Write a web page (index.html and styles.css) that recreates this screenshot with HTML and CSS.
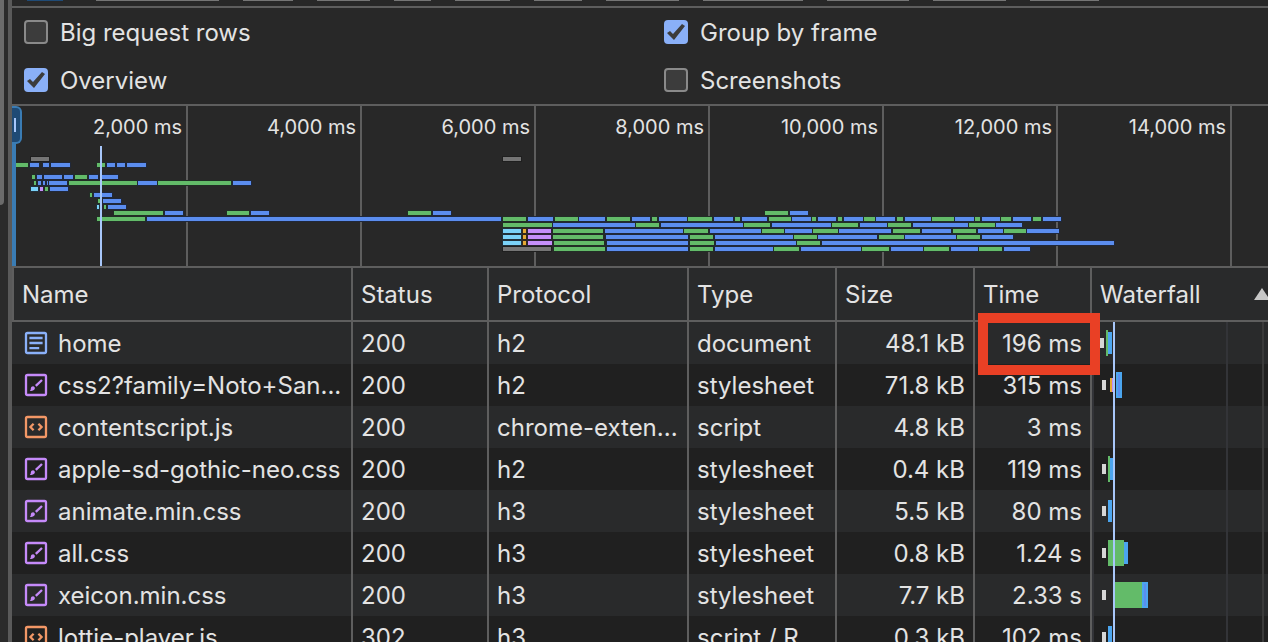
FILE: index.html
```html
<!DOCTYPE html>
<html lang="en">
<head>
    <meta charset="UTF-8">
    <meta name="viewport" content="width=device-width, initial-scale=1.0">
    <title>Network</title>
    <link rel="stylesheet" href="styles.css">
</head>
<body>
    <!-- Icons used in the request list -->
    <svg class="sprite" aria-hidden="true">
        <symbol id="icon-document" viewBox="0 0 24 24">
            <rect x="2" y="2" width="20" height="20" rx="1.5"/>
            <path d="M5.4 7h13.2M5.4 12h13.2M5.4 17.2h9.8"/>
        </symbol>
        <symbol id="icon-stylesheet" viewBox="0 0 24 24">
            <rect x="2" y="2" width="20" height="20" rx="1.5"/>
            <path d="M18 7l-6.2 5.8"/>
            <path class="solid" d="M9.2 13.2c1.6.4 2.2 2 1.2 3.4c-1 1.3-3 1.7-4.6 1.2c1-.8.9-1.4 1-2.4c.2-1.4 1.2-2.3 2.4-2.2z"/>
        </symbol>
        <symbol id="icon-script" viewBox="0 0 24 24">
            <rect x="2" y="2" width="20" height="20" rx="1.5"/>
            <path d="M9.6 8.7L6.4 12l3.2 3.3M14.4 8.7l3.2 3.3l-3.2 3.3"/>
        </symbol>
    </svg>

    <div class="gutter"><div class="thumb"></div></div>

    <main class="panel">
        <div class="filters">
            <span class="pill active"></span>
            <span class="pill w123"></span>
            <span class="pill w50"></span>
            <span class="pill w53"></span>
            <span class="pill w37"></span>
            <span class="pill w55"></span>
            <span class="pill w48"></span>
            <span class="pill w73"></span>
            <span class="pill w100"></span>
            <span class="pill w82"></span>
            <span class="pill w73"></span>
            <span class="pill w69"></span>
        </div>

        <div class="options">
            <label><input type="checkbox"> Big request rows</label>
            <label><input type="checkbox" checked> Group by frame</label>
            <label><input type="checkbox" checked> Overview</label>
            <label><input type="checkbox"> Screenshots</label>
        </div>

        <div class="overview">
            <div class="tick">2,000 ms</div>
            <div class="tick">4,000 ms</div>
            <div class="tick">6,000 ms</div>
            <div class="tick">8,000 ms</div>
            <div class="tick">10,000 ms</div>
            <div class="tick">12,000 ms</div>
            <div class="tick">14,000 ms</div>
            <svg class="bars" id="bars" viewBox="12 0 1256 160" preserveAspectRatio="none"></svg>
            <div class="edge"></div>
            <div class="handle"></div>
        </div>

        <table class="requests">
            <colgroup>
                <col class="col-name"><col class="col-status"><col class="col-protocol"><col class="col-type">
                <col class="col-size"><col class="col-time"><col>
            </colgroup>
            <thead>
                <tr>
                    <th>Name</th>
                    <th>Status</th>
                    <th>Protocol</th>
                    <th>Type</th>
                    <th>Size</th>
                    <th>Time</th>
                    <th><div class="sorted">Waterfall <svg width="16" height="12" viewBox="0 0 16 12"><path d="M8 0l8 12H0z"/></svg></div></th>
                </tr>
            </thead>
            <tbody>
                <tr>
                    <td><div class="file"><svg class="icon document"><use href="#icon-document"/></svg>home</div></td>
                    <td>200</td>
                    <td>h2</td>
                    <td>document</td>
                    <td class="num">48.1 kB</td>
                    <td class="num marked">196 ms</td>
                    <td class="waterfall"><svg width="174" height="42">
                        <rect class="queue" x="8" y="16" width="4" height="10"/>
                        <rect class="wait" x="14" y="8" width="2" height="26"/>
                        <rect class="load" x="16" y="10" width="4" height="22"/>
                        <rect class="event" x="21" y="0" width="2" height="42"/>
                    </svg></td>
                </tr>
                <tr>
                    <td><div class="file"><svg class="icon stylesheet"><use href="#icon-stylesheet"/></svg>css2?family=Noto+San...</div></td>
                    <td>200</td>
                    <td>h2</td>
                    <td>stylesheet</td>
                    <td class="num">71.8 kB</td>
                    <td class="num">315 ms</td>
                    <td class="waterfall"><svg width="174" height="42">
                        <rect class="queue" x="10" y="16" width="4" height="10"/>
                        <rect class="connect" x="18" y="14" width="2" height="14"/>
                        <rect class="ssl" x="20" y="14" width="2" height="14"/>
                        <rect class="load" x="24" y="8" width="6" height="26"/>
                        <rect class="receive" x="26" y="10" width="2" height="22"/>
                        <rect class="event" x="21" y="0" width="2" height="42"/>
                    </svg></td>
                </tr>
                <tr>
                    <td><div class="file"><svg class="icon script"><use href="#icon-script"/></svg>contentscript.js</div></td>
                    <td>200</td>
                    <td>chrome-exten...</td>
                    <td>script</td>
                    <td class="num">4.8 kB</td>
                    <td class="num">3 ms</td>
                    <td class="waterfall"><svg width="174" height="42">
                        <rect class="event" x="21" y="0" width="2" height="42"/>
                    </svg></td>
                </tr>
                <tr>
                    <td><div class="file"><svg class="icon stylesheet"><use href="#icon-stylesheet"/></svg>apple-sd-gothic-neo.css</div></td>
                    <td>200</td>
                    <td>h2</td>
                    <td>stylesheet</td>
                    <td class="num">0.4 kB</td>
                    <td class="num">119 ms</td>
                    <td class="waterfall"><svg width="174" height="42">
                        <rect class="queue" x="10" y="16" width="4" height="10"/>
                        <rect class="wait" x="16" y="8" width="2" height="26"/>
                        <rect class="load" x="18" y="10" width="4" height="22"/>
                        <rect class="event" x="21" y="0" width="2" height="42"/>
                    </svg></td>
                </tr>
                <tr>
                    <td><div class="file"><svg class="icon stylesheet"><use href="#icon-stylesheet"/></svg>animate.min.css</div></td>
                    <td>200</td>
                    <td>h3</td>
                    <td>stylesheet</td>
                    <td class="num">5.5 kB</td>
                    <td class="num">80 ms</td>
                    <td class="waterfall"><svg width="174" height="42">
                        <rect class="queue" x="10" y="16" width="4" height="10"/>
                        <rect class="load" x="16" y="10" width="4" height="22"/>
                        <rect class="event" x="21" y="0" width="2" height="42"/>
                    </svg></td>
                </tr>
                <tr>
                    <td><div class="file"><svg class="icon stylesheet"><use href="#icon-stylesheet"/></svg>all.css</div></td>
                    <td>200</td>
                    <td>h3</td>
                    <td>stylesheet</td>
                    <td class="num">0.8 kB</td>
                    <td class="num">1.24 s</td>
                    <td class="waterfall"><svg width="174" height="42">
                        <rect class="queue" x="10" y="16" width="4" height="10"/>
                        <rect class="wait" x="16" y="8" width="16" height="26"/>
                        <rect class="load" x="32" y="10" width="4" height="22"/>
                        <rect class="event" x="21" y="0" width="2" height="42"/>
                    </svg></td>
                </tr>
                <tr>
                    <td><div class="file"><svg class="icon stylesheet"><use href="#icon-stylesheet"/></svg>xeicon.min.css</div></td>
                    <td>200</td>
                    <td>h3</td>
                    <td>stylesheet</td>
                    <td class="num">7.7 kB</td>
                    <td class="num">2.33 s</td>
                    <td class="waterfall"><svg width="174" height="42">
                        <rect class="queue" x="10" y="16" width="4" height="10"/>
                        <rect class="wait" x="22" y="8" width="28" height="26"/>
                        <rect class="load" x="50" y="8" width="6" height="26"/>
                        <rect class="receive" x="52" y="10" width="2" height="22"/>
                        <rect class="event" x="21" y="0" width="2" height="42"/>
                    </svg></td>
                </tr>
                <tr>
                    <td><div class="file"><svg class="icon script"><use href="#icon-script"/></svg>lottie-player.js</div></td>
                    <td>302</td>
                    <td>h3</td>
                    <td>script / R...</td>
                    <td class="num">0.3 kB</td>
                    <td class="num">102 ms</td>
                    <td class="waterfall"><svg width="174" height="42">
                        <rect class="queue" x="10" y="16" width="4" height="10"/>
                        <rect class="load" x="16" y="10" width="4" height="22"/>
                        <rect class="event" x="21" y="0" width="2" height="42"/>
                    </svg></td>
                </tr>
            </tbody>
        </table>
    </main>

    <script src="script.js"></script>
</body>
</html>
```
FILE: styles.css
```css
* {
    box-sizing: border-box;
}
body {
    margin: 0;
    height: 100vh;
    overflow: hidden;
    display: flex;
    background-color: #282828;
    color: #e3e3e3;
    font-family: Inter, "Liberation Sans", sans-serif;
    font-size: 24px;
}
.sprite {
    position: absolute;
    width: 0;
    height: 0;
}
.gutter {
    flex: none;
    width: 12px;
    background-color: #2b2b2b;
    border-right: 4px solid #5a5a5a;
}
.thumb {
    width: 4px;
    height: 32vh;
    background-color: #6b6b6b;
    border-bottom-right-radius: 4px;
}
.panel {
    flex: 1;
    min-width: 0;
}

/* Bottom edge of the type filter buttons */
.filters {
    display: flex;
    gap: 24px;
    height: 8px;
    padding-left: 15px;
    overflow: hidden;
    border-bottom: 2px solid #5e5e5e;
}
.pill {
    flex: none;
    height: 1px;
    background-color: #757575;
}
.pill.active {
    width: 36px;
    margin-right: 9px;
    background-color: #1f4a75;
}
.w37 { width: 37px; }
.w48 { width: 48px; }
.w50 { width: 50px; }
.w53 { width: 53px; }
.w55 { width: 55px; }
.w69 { width: 69px; }
.w73 { width: 73px; }
.w82 { width: 82px; }
.w100 { width: 100px; }
.w123 { width: 123px; }

.options {
    display: grid;
    grid-template-columns: 1fr 1fr;
    column-gap: 36px;
    padding-left: 12px;
    border-bottom: 2px solid #5e5e5e;
}
.options label {
    display: flex;
    align-items: center;
    gap: 12px;
    height: 48px;
}
input[type="checkbox"] {
    appearance: none;
    width: 24px;
    height: 24px;
    margin: 0;
    border: 2px solid #8a8a8a;
    border-radius: 4px;
    background-color: #3c3c3c;
}
input[type="checkbox"]:checked {
    border: none;
    background-color: #8ab0f8;
}
input[type="checkbox"]:checked::before {
    content: "";
    display: block;
    height: 24px;
    background-color: #3c3c3c;
    clip-path: polygon(3px 13px, 6px 11px, 9px 14px, 18px 4px, 21px 6px, 10px 20px);
}

.overview {
    position: relative;
    display: grid;
    grid-template-columns: 176fr repeat(6, 174fr) 36fr;
    height: 162px;
    border-bottom: 2px solid #5e5e5e;
}
.tick {
    padding: 9px 4px 0 0;
    border-right: 2px solid #5e5e5e;
    font-size: 20px;
    line-height: 24px;
    text-align: right;
    white-space: nowrap;
}
.bars {
    position: absolute;
    top: 0;
    left: 0;
    width: 100%;
    height: 100%;
}
.bars rect {
    stroke-width: 2;
    paint-order: stroke;
}
.edge {
    position: absolute;
    left: 0;
    top: 0;
    width: 4px;
    height: 100%;
    background-color: #3a7cb4;
}
.handle {
    position: absolute;
    left: 0;
    top: 0;
    width: 10px;
    height: 38px;
    padding: 10px 2px;
    border: 2px solid #3a7cb4;
    border-left: none;
    border-radius: 0 6px 6px 0;
    background-color: #1f4a75;
}
.handle::before {
    content: "";
    display: block;
    width: 2px;
    height: 14px;
    background-color: #a8c7fa;
}

.requests {
    width: 100%;
    table-layout: fixed;
    border-collapse: separate;
    border-spacing: 0;
}
.col-name { width: 341px; }
.col-status { width: 136px; }
.col-protocol { width: 200px; }
.col-type { width: 148px; }
.col-size { width: 138px; }
.col-time { width: 117px; }
th, td {
    padding: 0 8px;
    border-right: 2px solid #5e5e5e;
    font-weight: normal;
    text-align: left;
    white-space: nowrap;
}
th {
    height: 54px;
    background-color: #292a2b;
    border-bottom: 2px solid #5e5e5e;
}
th:first-child {
    border-left: 2px solid #5e5e5e;
}
th:last-child, td:last-child {
    border-right: none;
}
th:last-child {
    padding-right: 0;
    overflow: hidden;
}
td {
    height: 42px;
}
tbody tr:nth-child(odd) {
    background-color: #292a2b;
}
tbody tr:nth-child(even) {
    background-color: #202020;
}
.sorted {
    display: flex;
    align-items: center;
    justify-content: space-between;
    margin-right: -2px;
}
.sorted path {
    fill: #c7c7c7;
}
.file {
    display: flex;
    align-items: center;
    gap: 10px;
    padding-left: 4px;
}
.icon {
    flex: none;
    width: 24px;
    height: 24px;
    fill: none;
    stroke: currentColor;
    stroke-width: 2.3;
}
.icon.document { color: #8ab0f8; }
.icon.stylesheet { color: #c58af9; }
.icon.script { color: #f29766; }
.solid {
    fill: currentColor;
    stroke: none;
}
.num {
    text-align: right;
}
.marked {
    position: relative;
}
.marked::after {
    content: "";
    position: absolute;
    z-index: 1;
    inset: -9px -10px -11px 3px;
    border: 10px solid #e94025;
}
.waterfall {
    padding: 0;
    border-left: 2px solid #333438;
    background: linear-gradient(#333438, #333438) 132px 0 / 2px 100% no-repeat,
        linear-gradient(#3a3a3a, #3a3a3a) right 4px top 0 / 2px 100% no-repeat;
}
.waterfall svg {
    display: block;
    margin-left: -2px;
}
.queue { fill: #d6d6d6; }
.wait { fill: #63bb69; }
.load { fill: #4ba5ee; }
.receive { fill: #5b8def; }
.connect { fill: #e5a935; }
.ssl { fill: #c58af9; }
.event { fill: #a8c7fa; }
```
FILE: script.js
```javascript
// g: waiting, b: receiving, c: dns, o: connecting, p: ssl, x: blocked
const colors = {
    g: ["#63bb69", "#222e26"],
    b: ["#5b8def", "#20283a"],
    c: ["#7bd2f8", "#22303a"],
    o: ["#e5a935", "#33291c"],
    p: ["#c58ffa", "#2c2436"],
    x: ["#757575", "#1f1f1f"]
};

// One line per lane, each bar is kind + start-end
const lanes = [
    "x31-49 x503-521",
    "g16-28 b30-39 b43-49 b51-70 g97-105 b107-115 b117-125 b127-146",
    "",
    "g32-35 b37-42 b44-62 b64-73 g75-87 b89-98 b100-118",
    "g34-36 b38-41 b43-45 b47-48 b49-67 g69-137 b138-157 g158-231 b233-251",
    "c31-38 p40-43 g45-48 b50-68",
    "g90-92 b94-112",
    "g98-101 b103-121",
    "c97-99 p101-102 g104-106 b108-126",
    "g114-163 b165-183 g227-249 b251-269 g408-431 b433-451 g765-788 b790-808",
    "g97-145 b147-501 g503-526 b528-553 g555-578 b579-605 g607-630 b632-650 g652-657 b659-687 g688-712 b714-733 g735-740 b742-767 g769-791 b792-811 g812-816 b818-836 g838-842 b844-863 g864-875 b876-895 g897-903 b905-931 g932-954 b955-974 g975-980 b982-1000 g1001-1011 b1013-1031 g1033-1041 b1043-1061",
    "g503-552 b553-635 g636-659 b661-743 g744-770 b772-831 g832-858 b860-887 g888-911 b913-968 g969-995 b996-1022",
    "c503-521 o523-526 p528-551 g553-603 b605-683 g684-708 b710-761 g762-784 b785-812 g813-838 b839-891 g893-920 b922-951 g953-976 b978-1003 g1004-1026 b1027-1059",
    "c503-521 o523-526 p528-551 g553-603 b606-688 g690-713 b715-793 g794-817 b818-877 g879-904 b905-956 g957-980 b982-1013",
    "c503-521 o523-526 p528-552 g554-604 b607-688 g690-714 b716-796 g797-820 b822-1114",
    "x503-551 g554-605 b607-688 g690-713 b715-773 g774-799 b801-861 g862-889 b891-923 g924-949 b951-978 g979-1002 b1004-1030"
];

const svg = document.getElementById("bars");

function addRect(x, y, width, height, fill, stroke) {
    const rect = document.createElementNS("http://www.w3.org/2000/svg", "rect");
    rect.setAttribute("x", x);
    rect.setAttribute("y", y);
    rect.setAttribute("width", width);
    rect.setAttribute("height", height);
    rect.setAttribute("fill", fill);
    rect.setAttribute("stroke", stroke);
    svg.appendChild(rect);
}

lanes.forEach((lane, i) => {
    for (const [, kind, start, end] of lane.matchAll(/(\w)(\d+)-(\d+)/g)) {
        addRect(start, 51 + i * 6, end - start, 4, colors[kind][0], colors[kind][1]);
    }
});

// DOMContentLoaded marker
addRect(100, 40, 2, 120, "#a8c7fa", "none");
```
